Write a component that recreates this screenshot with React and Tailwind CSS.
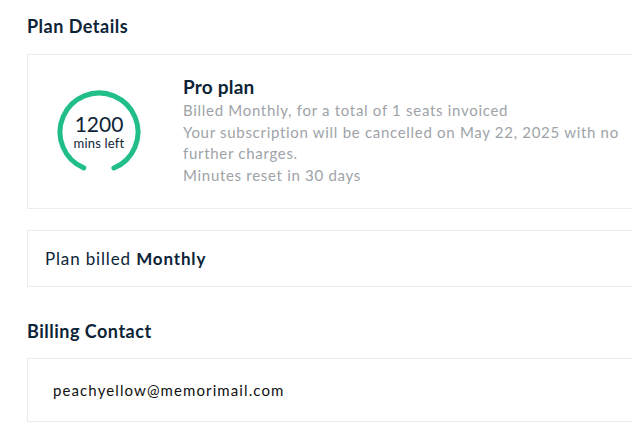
import React from 'react';

const font = { fontFamily: 'Lato, "Noto Sans", sans-serif' };

function MinutesGauge({ minutes = 1200 }) {
  // open ring with a gap at the bottom
  const r = 39;
  const c = 2 * Math.PI * r;
  const arc = c * (314 / 360);
  return (
    <div className="relative w-[88px] h-[88px] shrink-0">
      <svg width="88" height="88" viewBox="0 0 88 88" className="absolute inset-0">
        <circle
          cx="44"
          cy="44"
          r={r}
          fill="none"
          stroke="#21bf87"
          strokeWidth="5"
          strokeLinecap="round"
          strokeDasharray={`${arc} ${c}`}
          transform="rotate(113 44 44)"
        />
      </svg>
      <div className="absolute inset-0 flex flex-col items-center justify-center">
        <span className="text-[21px] leading-[22px] text-[#0d2437]">{minutes}</span>
        <span className="text-[13px] tracking-[0.2px] leading-[16px] text-[#0d2437]">mins left</span>
      </div>
    </div>
  );
}

export default function App() {
  return (
    <div className="min-h-screen bg-white pl-[27px] pt-[14px]" style={font}>
      <h2 className="text-[18px] font-bold tracking-[0.5px] text-[#0d2437] leading-[24px]">Plan Details</h2>

      <div className="mt-[16px] border border-[#ececec] border-r-0 h-[155px] flex items-center pl-[27px]">
        <MinutesGauge />
        <div className="ml-[40px] -mt-[2px]">
          <div className="text-[19px] font-bold tracking-[0.2px] text-[#0d2437] leading-[24px] mb-[1px]">Pro plan</div>
          <div className="text-[15px] tracking-[0.7px] text-[#9ea3a8] leading-[21.5px] w-[445px]">
            <p>Billed Monthly, for a total of 1 seats invoiced</p>
            <p>Your subscription will be cancelled on May 22, 2025 with no further charges.</p>
            <p>Minutes reset in 30 days</p>
          </div>
        </div>
      </div>

      <div className="mt-[21px] border border-[#ececec] border-r-0 h-[57px] flex items-center pl-[17px]">
        <span className="text-[17px] tracking-[0.85px] text-[#0d2437]">
          Plan billed <span className="font-bold">Monthly</span>
        </span>
      </div>

      <h2 className="mt-[32px] text-[18px] font-bold tracking-[0.5px] text-[#0d2437] leading-[24px]">Billing Contact</h2>

      <div className="mt-[15px] border border-[#ececec] border-r-0 h-[64px] flex items-center pl-[25px]">
        <span className="text-[15px] tracking-[1.1px] text-[#111]">peachyellow@memorimail.com</span>
      </div>
    </div>
  );
}
